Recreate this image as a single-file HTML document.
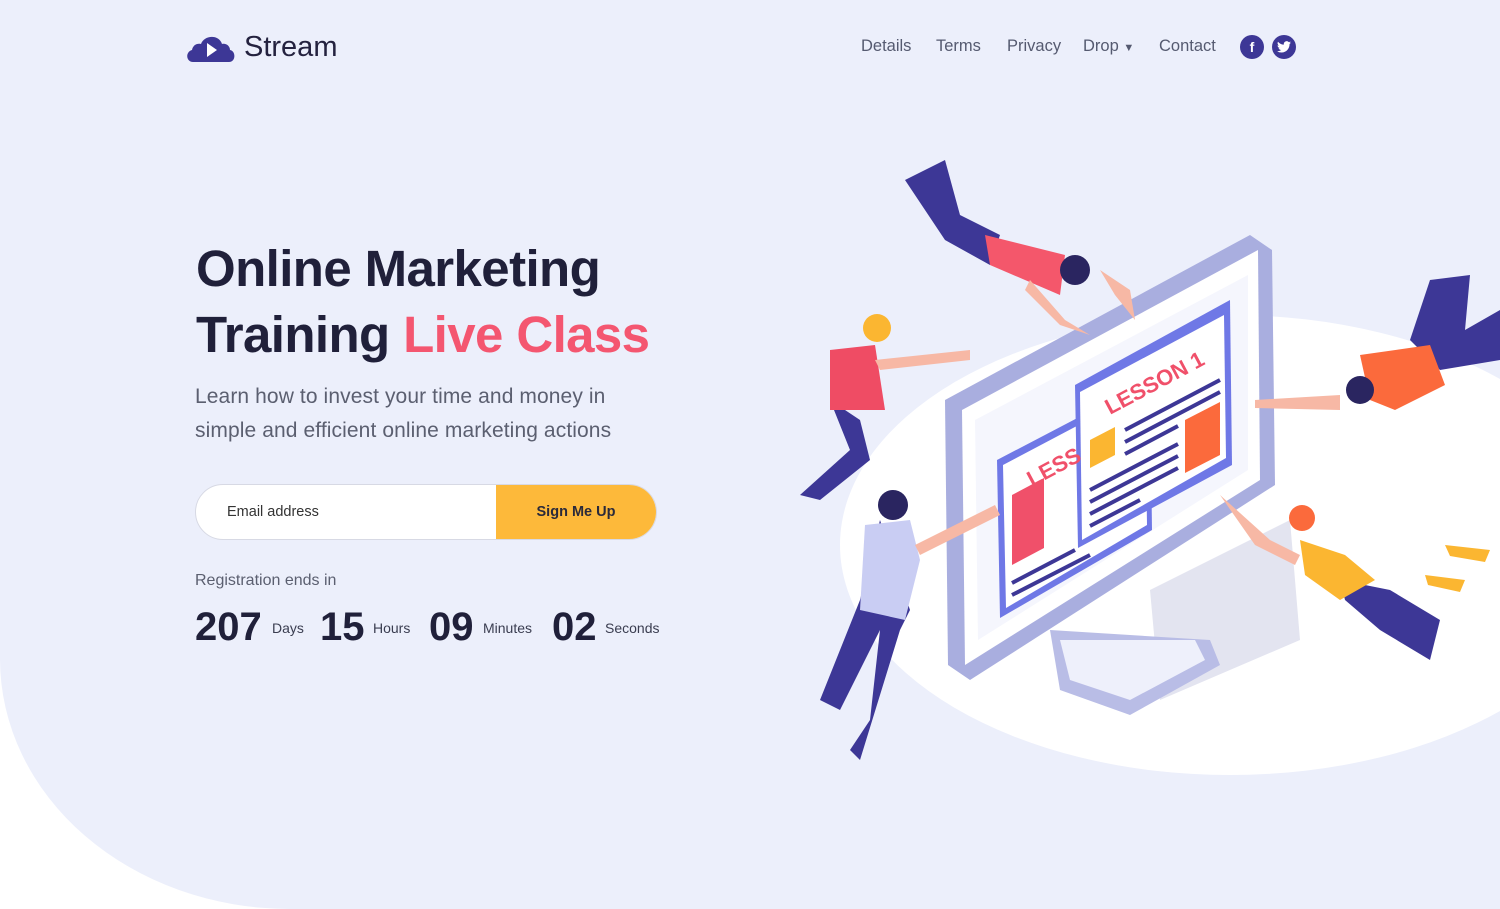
<!DOCTYPE html>
<html><head><meta charset="utf-8"><style>
*{margin:0;padding:0;box-sizing:border-box}
body{width:1500px;height:909px;background:#fff;font-family:"Liberation Sans",sans-serif;position:relative;overflow:hidden}
.bg{position:absolute;left:0;top:0;width:1500px;height:909px;background:#eceffb;border-bottom-left-radius:290px 250px}
.logo{position:absolute;left:186px;top:31px;display:flex;align-items:center}
.logo span{font-size:29px;color:#24223f;margin-left:8px}
nav{position:absolute;top:37px;left:861px;font-size:16.5px;color:#555a70}
nav a{position:absolute;white-space:nowrap}
.soc{position:absolute;top:35px;width:24px;height:24px;border-radius:50%;background:#3d3796;color:#fff;font-weight:bold;font-size:14px;text-align:center;line-height:24px}
h1{position:absolute;left:196px;top:236px;font-size:51px;line-height:66px;color:#20203a;font-weight:bold;letter-spacing:-0.6px}
h1 em{font-style:normal;color:#f45670}
.p{position:absolute;left:195px;top:380px;font-size:21px;line-height:34px;color:#5b5f70;letter-spacing:0.1px}
.form{position:absolute;left:195px;top:484px;width:462px;height:56px;border-radius:28px;background:#fff;border:1px solid #d7d9e4;overflow:hidden}
.form .e{position:absolute;left:31px;top:19px;font-size:14.5px;color:#333}
.form .b{position:absolute;right:0;top:0;width:160px;height:56px;background:#fdb93a;color:#2a2a3a;font-size:14.5px;font-weight:bold;text-align:center;line-height:54px}
.reg{position:absolute;left:195px;top:572px;font-size:16px;color:#5b5f70}
.cd{position:absolute;top:605px;font-size:40px;font-weight:bold;color:#20203a}
.cl{position:absolute;top:620px;font-size:14px;color:#3a3d50}
</style></head><body>
<div class="bg"></div>
<div class="logo"><svg width="50" height="32" viewBox="0 0 50 32"><path d="M7 30 C0 30 -1 20 6 18 C7 13 11 11 15 12 C18 3 33 2 36 12 C40 11 44 14 44 18 C50 19 50 30 43 30 Z" fill="#3d3796"/><path d="M21 11 L31 18 L21 25 Z" fill="#fff"/></svg><span>Stream</span></div>
<nav><a style="left:0">Details</a><a style="left:75px">Terms</a><a style="left:146px">Privacy</a><a style="left:222px">Drop <span style="font-size:11px">▼</span></a><a style="left:298px">Contact</a></nav>
<div class="soc" style="left:1240px">f</div>
<div class="soc" style="left:1272px"><svg width="14" height="12" viewBox="0 0 24 20" style="margin-top:6px"><path d="M24 2.4a10 10 0 0 1-2.8.8A5 5 0 0 0 23.3.5a10 10 0 0 1-3.1 1.2A4.9 4.9 0 0 0 11.8 6 14 14 0 0 1 1.7.9a4.9 4.9 0 0 0 1.5 6.6A4.900 4.900 0 0 1 1 6.9a4.9 4.9 0 0 0 3.900 4.800A5 5 0 0 1 2.7 11.8 4.9 4.9 0 0 0 7.3 15.2 9.9 9.9 0 0 1 0 17.2 14 14 0 0 0 7.5 19.4c9.100 0 14-7.500 14-14v-.6A10 10 0 0 0 24 2.400z" fill="#fff"/></svg></div>
<h1>Online Marketing<br>Training <em>Live Class</em></h1>
<div class="p">Learn how to invest your time and money in<br>simple and efficient online marketing actions</div>
<div class="form"><div class="e">Email address</div><div class="b">Sign Me Up</div></div>
<div class="reg">Registration ends in</div>
<div class="cd" style="left:195px">207</div><div class="cl" style="left:272px">Days</div>
<div class="cd" style="left:320px">15</div><div class="cl" style="left:373px">Hours</div>
<div class="cd" style="left:429px">09</div><div class="cl" style="left:483px">Minutes</div>
<div class="cd" style="left:552px">02</div><div class="cl" style="left:605px">Seconds</div>
<svg style="position:absolute;left:760px;top:140px" width="740" height="640" viewBox="760 140 740 640">
<ellipse cx="1230" cy="545" rx="390" ry="230" fill="#fff"/>
<path d="M1150 590 L1290 520 L1300 640 L1160 700 Z" fill="#e3e4f0"/>
<path d="M1050 630 L1060 690 L1130 715 L1220 665 L1210 640 Z" fill="#b9bde6"/>
<path d="M1060 640 L1070 680 L1130 700 L1205 660 L1195 640 Z" fill="#eef0fb"/>
<path d="M945 400 L1250 235 L1272 250 L1275 485 L970 680 L948 665 Z" fill="#a9aedf"/>
<path d="M962 410 L1258 250 L1260 480 L965 665 Z" fill="#fff"/>
<path d="M975 420 L1248 275 L1248 470 L978 640 Z" fill="#f5f6fd"/>
<path d="M997 460 L1150 380 L1152 530 L1000 618 Z" fill="#6f78e6"/>
<path d="M1003 465 L1145 390 L1147 525 L1006 608 Z" fill="#fff"/>
<path d="M1012 495 L1044 478 L1044 548 L1012 565 Z" fill="#f0506a"/>
<path d="M1075 385 L1230 300 L1232 465 L1078 548 Z" fill="#6f78e6"/>
<path d="M1080 392 L1224 315 L1226 458 L1082 540 Z" fill="#fff"/>
<text x="1110" y="415" fill="#f0506a" font-size="22" font-weight="bold" transform="rotate(-28 1110 415)">LESSON 1</text>
<text x="1032" y="487" fill="#f0506a" font-size="22" font-weight="bold" transform="rotate(-28 1032 487)">LESS</text>
<path d="M1090 440 L1115 427 L1115 455 L1090 468 Z" fill="#fbb631"/>
<path d="M1185 420 L1220 402 L1220 455 L1185 473 Z" fill="#fb6a3c"/>
<g stroke="#3d3796" stroke-width="4">
<line x1="1125" y1="430" x2="1220" y2="380"/><line x1="1125" y1="442" x2="1220" y2="392"/><line x1="1125" y1="454" x2="1178" y2="426"/><line x1="1090" y1="490" x2="1178" y2="444"/><line x1="1090" y1="502" x2="1178" y2="456"/><line x1="1090" y1="514" x2="1178" y2="468"/><line x1="1090" y1="526" x2="1140" y2="500"/>
<line x1="1012" y1="583" x2="1075" y2="550"/><line x1="1012" y1="595" x2="1090" y2="555"/></g>
<g fill="#3d3796"><path d="M905 180 L945 160 L960 215 L1000 235 L990 265 L945 240 Z"/><path d="M1430 280 L1470 275 L1465 330 L1500 310 L1500 360 L1440 370 L1410 340 Z"/>
<path d="M880 520 L860 600 L820 700 L840 710 L880 630 L870 720 L850 750 L860 760 L900 630 L910 610 Z"/>
<path d="M830 400 L860 420 L870 460 L820 500 L800 495 L850 450 Z"/>
<path d="M1340 580 L1390 590 L1440 620 L1430 660 L1380 630 L1345 600 Z"/></g>
<path d="M985 235 L1065 255 L1060 295 L990 265 Z" fill="#f4576b"/>
<path d="M1360 355 L1430 345 L1445 385 L1395 410 L1370 400 Z" fill="#fb6a3c"/>
<path d="M830 350 L875 345 L885 410 L830 410 Z" fill="#ef4c64"/>
<path d="M865 525 L910 520 L920 560 L905 620 L860 610 Z" fill="#c9cdf3"/>
<path d="M1300 540 L1345 555 L1375 580 L1340 600 L1305 575 Z" fill="#fbb631"/>
<g fill="#f7b8a5"><path d="M1030 280 L1065 320 L1090 335 L1060 325 L1025 290 Z"/><path d="M1100 270 L1130 290 L1135 320 L1115 295 Z"/><path d="M875 360 L970 350 L970 360 L880 370 Z"/><path d="M915 545 L995 505 L1000 515 L920 555 Z"/><path d="M1255 400 L1340 395 L1340 410 L1255 408 Z"/><path d="M1220 495 L1270 540 L1300 555 L1295 565 L1255 545 Z"/></g>
<circle cx="1075" cy="270" r="15" fill="#2a2560"/><circle cx="1360" cy="390" r="14" fill="#2a2560"/><circle cx="877" cy="328" r="14" fill="#fbb631"/><circle cx="893" cy="505" r="15" fill="#2a2560"/><circle cx="1302" cy="518" r="13" fill="#fb6a3c"/>
<g fill="#fbb631"><path d="M1445 545 L1490 550 L1485 562 L1450 556 Z"/><path d="M1425 575 L1465 580 L1460 592 L1428 585 Z"/></g>
</svg>
</body></html>
